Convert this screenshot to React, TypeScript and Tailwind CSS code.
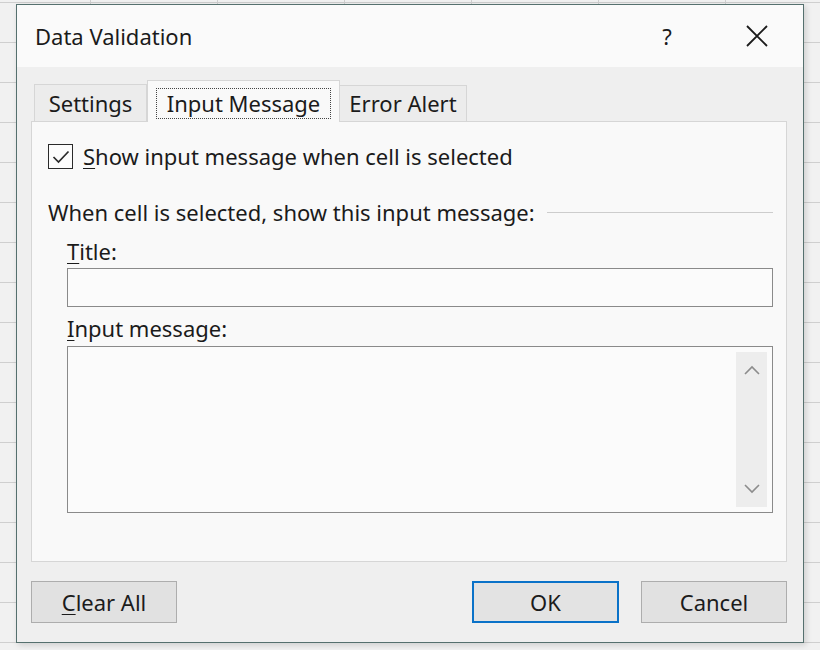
const cols = ["w-[91px]", "w-[127px]", "w-[127px]", "w-[127px]", "w-[127px]", "w-[127px]", "w-[127px]"];
const rows = Array.from({ length: 17 }, (_, i) => (i === 0 ? "h-[3px]" : "h-[40px]"));

function SheetGrid() {
  return (
    <div className="flex flex-col">
      {rows.map((h, r) => (
        <div key={r} className={`flex ${h}`}>
          {cols.map((w, c) => (
            <div key={c} className={`${w} shrink-0 border-r border-b border-[#cfcfcf]`} />
          ))}
        </div>
      ))}
    </div>
  );
}

function Underlined({ ch, rest }: { ch: string; rest: string }) {
  return (
    <span>
      <span className="underline underline-offset-[3px] decoration-1">{ch}</span>
      {rest}
    </span>
  );
}

function Chevron({ up }: { up?: boolean }) {
  return (
    <svg width="16" height="10" viewBox="0 0 16 10" fill="none" stroke="#8c8c8c" strokeWidth="1.6">
      {up ? <path d="M1 9 L8 2 L15 9" /> : <path d="M1 1 L8 8 L15 1" />}
    </svg>
  );
}

export default function App() {
  return (
    <div
      className="relative w-[820px] h-[650px] overflow-hidden bg-[#f1f1f1] text-[#1b1b1b]"
      style={{ fontFamily: '"Noto Sans", "Open Sans", sans-serif' }}
    >
      <SheetGrid />

      {/* Dialog */}
      <div className="absolute left-[16px] top-[4px] w-[788px] h-[639px] border border-[#55706e] bg-[#efefef] flex flex-col shadow-[2px_2px_6px_rgba(0,0,0,0.15)]">
        {/* Title bar */}
        <div className="h-[62px] bg-[#fafafa] flex items-center pl-[18px] text-[22px]">
          <span className="flex-1">Data Validation</span>
          <span className="w-[20px] text-center mr-[69px] text-[22px]">?</span>
          <svg width="22" height="22" viewBox="0 0 22 22" className="mr-[35px]" stroke="#1b1b1b" strokeWidth="1.8">
            <path d="M1 1 L21 21 M21 1 L1 21" />
          </svg>
        </div>

        {/* Body */}
        <div className="flex-1 flex flex-col pl-[14px] pr-[16px] pt-[13px] text-[22px]">
          {/* Tabs */}
          <div className="flex items-end h-[41px] pl-[3px]">
            <div className="w-[113px] h-[37px] border border-b-0 border-[#d6d6d6] bg-[#ececec] flex items-center justify-center">
              Settings
            </div>
            <div className="relative z-10 w-[193px] h-[42px] mb-[-1px] border border-b-0 border-[#d6d6d6] bg-[#f9f9f9] px-[8px] pt-[7px] pb-[3px]">
              <div className="h-full border border-dotted border-[#444] flex items-center justify-center">
                Input Message
              </div>
            </div>
            <div className="w-[127px] h-[36px] border border-b-0 border-l-0 border-[#d6d6d6] bg-[#ececec] flex items-center justify-center">
              Error Alert
            </div>
          </div>

          {/* Panel */}
          <div className="h-[441px] border border-[#d6d6d6] bg-[#f9f9f9] flex flex-col pl-[16px] pr-[13px]">
            <div className="flex items-center mt-[22px] h-[25px]">
              <div className="w-[25px] h-[25px] border-[1.5px] border-[#2a2a2a] bg-[#fcfcfc] flex items-center justify-center">
                <svg width="18" height="14" viewBox="0 0 18 14" fill="none" stroke="#2a2a2a" strokeWidth="1.7">
                  <path d="M1.5 7 L6.5 12 L16.5 1.5" />
                </svg>
              </div>
              <span className="ml-[10px]">
                <Underlined ch="S" rest="how input message when cell is selected" />
              </span>
            </div>

            <div className="flex items-center mt-[28px] h-[30px]">
              <span>When cell is selected, show this input message:</span>
              <div className="flex-1 ml-[12px] h-px bg-[#cdcdcd]" />
            </div>

            <div className="pl-[19px] flex flex-col">
              <div className="mt-[9px] h-[30px] flex items-center">
                <Underlined ch="T" rest="itle:" />
              </div>
              <div className="mt-[2px] h-[39px] border border-[#8a8a8a] bg-[#fbfbfb]" />
              <div className="mt-[6px] h-[30px] flex items-center">
                <Underlined ch="I" rest="nput message:" />
              </div>
              <div className="mt-[3px] h-[167px] border border-[#8a8a8a] bg-[#fbfbfb] flex justify-end p-[5px]">
                <div className="w-[31px] bg-[#ededed] flex flex-col items-center justify-between py-[13px]">
                  <Chevron up />
                  <Chevron />
                </div>
              </div>
            </div>
          </div>

          {/* Buttons */}
          <div className="flex mt-[19px] h-[42px]">
            <button className="w-[146px] h-[42px] border border-[#adadad] bg-[#e1e1e1] text-[22px]">
              <Underlined ch="C" rest="lear All" />
            </button>
            <div className="flex-1" />
            <button className="w-[147px] h-[42px] border-2 border-[#0a72c8] bg-[#e3e3e3] text-[22px]">OK</button>
            <button className="ml-[22px] w-[146px] h-[42px] border border-[#adadad] bg-[#e1e1e1] text-[22px]">Cancel</button>
          </div>
        </div>
      </div>
    </div>
  );
}
